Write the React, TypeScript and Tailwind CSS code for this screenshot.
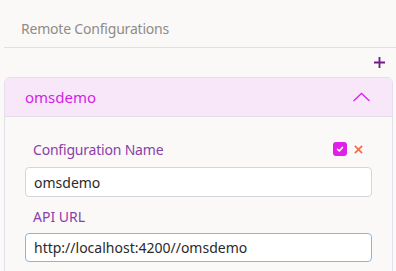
import { useEffect, useRef } from 'react';

export default function App() {
  const urlRef = useRef<HTMLInputElement>(null);

  useEffect(() => {
    const el = urlRef.current;
    if (el) {
      el.focus();
      el.setSelectionRange(0, 0);
    }
  }, []);

  return (
    <div
      className="w-[396px] h-[271px] overflow-hidden bg-[#faf9f8]"
      style={{ fontFamily: '"Noto Sans", sans-serif' }}
    >
      <div className="ml-[4px] h-[48px] border-b border-[#e2e0e6] flex items-center pl-[17px] pt-[9px]">
        <span className="text-[14px] tracking-[-0.2px] text-[#918b87]">Remote Configurations</span>
      </div>

      {/* add button */}
      <div className="h-[29px] flex items-center justify-end pr-[11px]">
        <svg className="w-[11px] h-[11px] text-[#6f1f86]" viewBox="0 0 12 12" fill="none" stroke="currentColor">
          <path strokeWidth={2} d="M6 0v12M0 6h12" />
        </svg>
      </div>

      <div className="ml-[4px] mr-[3px] border border-[#e4e0ea] rounded-t-[6px] overflow-hidden">
        <div className="h-[39px] bg-[#f8e7f9] border-b border-[#e4dde8] flex items-center justify-between pl-[20px] pr-[22px]">
          <span className="text-[15px] text-[#d21ee6]">omsdemo</span>
          <svg className="w-[17px] h-[10px] text-[#e020f0]" viewBox="0 0 17 10" fill="none" stroke="currentColor">
            <path strokeWidth={1.3} d="M0.5 9L8.5 1.5L16.5 9" />
          </svg>
        </div>

        <div className="pl-[20px] pr-[20px] pt-[22px] pb-[10px]">
          <div className="flex items-center justify-between pl-[8px] pr-[9px] h-[20px]">
            <span className="text-[14px] tracking-[-0.2px] text-[#8a3fa8]">Configuration Name</span>
            <div className="flex items-center gap-[7px]">
              <span className="w-[14px] h-[14px] rounded-[3px] bg-[#e020ea] flex items-center justify-center">
                <svg className="w-[8px] h-[8px]" viewBox="0 0 10 10" fill="none" stroke="white">
                  <path strokeWidth={2} strokeLinecap="round" strokeLinejoin="round" d="M2 5.5L4.2 7.5L8 3" />
                </svg>
              </span>
              <svg className="w-[9px] h-[9px] text-[#f26a4a]" viewBox="0 0 10 10" fill="none" stroke="currentColor">
                <path strokeWidth={1.8} d="M1 1L9 9M9 1L1 9" />
              </svg>
            </div>
          </div>

          <input
            defaultValue="omsdemo"
            className="mt-[8px] w-full h-[30px] bg-white border border-[#d5d5dc] rounded-[4px] px-[8px] text-[14px] text-[#2a2a2a] outline-none"
            style={{ fontFamily: '"Noto Sans", sans-serif' }}
          />

          <div className="pl-[8px] mt-[9px] h-[20px] flex items-center">
            <span className="text-[14px] text-[#8a3fa8]">API URL</span>
          </div>

          <input
            ref={urlRef}
            defaultValue="http://localhost:4200//omsdemo"
            className="mt-[7px] w-full h-[29px] bg-white border border-[#86b4f2] rounded-[4px] px-[8px] text-[14px] text-[#2a2a2a] outline-none caret-black"
            style={{ fontFamily: '"Noto Sans", sans-serif' }}
          />
        </div>
      </div>
    </div>
  );
}
